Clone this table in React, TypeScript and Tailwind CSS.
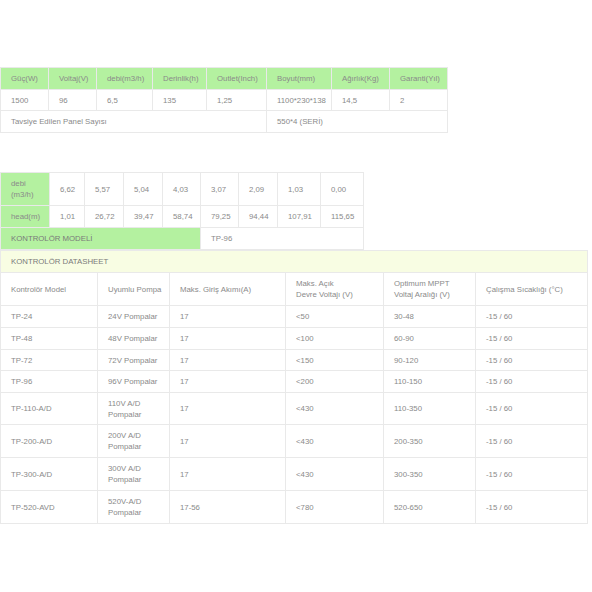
const cell = 'border border-[#e9e9e9] pl-[10px] pr-[4px] align-middle text-left font-normal whitespace-nowrap';

const specCols = [48, 48, 56, 54, 60, 65, 58, 58];
const specHead = ['Güç(W)', 'Voltaj(V)', 'debi(m3/h)', 'Derinlik(h)', 'Outlet(Inch)', 'Boyut(mm)', 'Ağırlık(Kg)', 'Garanti(Yıl)'];
const specRow = ['1500', '96', '6,5', '135', '1,25', '1100*230*138', '14,5', '2'];

const curveCols = [49, 35, 39, 39, 38, 38, 39, 43, 43];
const debi = ['6,62', '5,57', '5,04', '4,03', '3,07', '2,09', '1,03', '0,00'];
const head = ['1,01', '26,72', '39,47', '58,74', '79,25', '94,44', '107,91', '115,65'];

const dsCols = [97, 72, 116, 98, 92, 112];
const dsHead = [['Kontrolör Model'], ['Uyumlu Pompa'], ['Maks. Giriş Akımı(A)'], ['Maks. Açık', 'Devre Voltajı (V)'], ['Optimum MPPT', 'Voltaj Aralığı (V)'], ['Çalışma Sıcaklığı (°C)']];
const dsRows = [
  ['TP-24', '24V Pompalar', '17', '<50', '30-48', '-15 / 60'],
  ['TP-48', '48V Pompalar', '17', '<100', '60-90', '-15 / 60'],
  ['TP-72', '72V Pompalar', '17', '<150', '90-120', '-15 / 60'],
  ['TP-96', '96V Pompalar', '17', '<200', '110-150', '-15 / 60'],
  ['TP-110-A/D', '110V A/D|Pompalar', '17', '<430', '110-350', '-15 / 60'],
  ['TP-200-A/D', '200V A/D|Pompalar', '17', '<430', '200-350', '-15 / 60'],
  ['TP-300-A/D', '300V A/D|Pompalar', '17', '<430', '300-350', '-15 / 60'],
  ['TP-520-AVD', '520V-A/D|Pompalar', '17-56', '<780', '520-650', '-15 / 60'],
];
// row heights in the datasheet, measured off the screenshot
const dsHeights = ['h-[22px]', 'h-[22px]', 'h-[21px]', 'h-[22px]', 'h-[32px]', 'h-[33px]', 'h-[33px]', 'h-[33px]'];

function Lines({ text }: { text: string }) {
  const parts = text.split('|');
  return (
    <>
      {parts.map((p, i) => (
        <span key={i}>
          {i > 0 && <br />}
          {p}
        </span>
      ))}
    </>
  );
}

export default function App() {
  return (
    <div className="w-[592px] h-[592px] bg-white text-[#8a8a8a] text-[7.8px] leading-[11px] font-['Liberation_Sans',Arial,sans-serif] pt-[67px]">
      {/* pompa özellikleri */}
      <table className="table-fixed border-collapse w-[447px]">
        <colgroup>
          {specCols.map((w, i) => <col key={i} style={{ width: w }} />)}
        </colgroup>
        <tbody>
          <tr className="h-[22px] bg-[#b4f1a0]">
            {specHead.map((t) => <td key={t} className={cell}>{t}</td>)}
          </tr>
          <tr className="h-[21px]">
            {specRow.map((t, i) => <td key={i} className={cell}>{t}</td>)}
          </tr>
          <tr className="h-[22px]">
            <td colSpan={5} className={cell}>Tavsiye Edilen Panel Sayısı</td>
            <td colSpan={3} className={cell}>550*4 (SERİ)</td>
          </tr>
        </tbody>
      </table>

      {/* debi / basma eğrisi */}
      <table className="table-fixed border-collapse w-[363px] mt-[39px]">
        <colgroup>
          {curveCols.map((w, i) => <col key={i} style={{ width: w }} />)}
        </colgroup>
        <tbody>
          <tr className="h-[33px]">
            <td className={`${cell} bg-[#b4f1a0]`}>debi<br />(m3/h)</td>
            {debi.map((t, i) => <td key={i} className={cell}>{t}</td>)}
          </tr>
          <tr className="h-[22px]">
            <td className={`${cell} bg-[#b4f1a0]`}>head(m)</td>
            {head.map((t, i) => <td key={i} className={cell}>{t}</td>)}
          </tr>
          <tr className="h-[22px]">
            <td colSpan={5} className={`${cell} bg-[#b4f1a0] text-[#7a7a7a]`}>KONTROLÖR MODELİ</td>
            <td colSpan={4} className={cell}>TP-96</td>
          </tr>
        </tbody>
      </table>

      {/* kontrolör datasheet */}
      <table className="table-fixed border-collapse w-[587px]">
        <colgroup>
          {dsCols.map((w, i) => <col key={i} style={{ width: w }} />)}
        </colgroup>
        <tbody>
          <tr className="h-[22px] bg-[#f8fde3]">
            <td colSpan={6} className={`${cell} text-[#7a7a7a]`}>KONTROLÖR DATASHEET</td>
          </tr>
          <tr className="h-[33px]">
            {dsHead.map((t, i) => <td key={i} className={cell}><Lines text={t.join('|')} /></td>)}
          </tr>
          {dsRows.map((r, ri) => (
            <tr key={ri} className={dsHeights[ri]}>
              {r.map((t, i) => <td key={i} className={cell}><Lines text={t} /></td>)}
            </tr>
          ))}
        </tbody>
      </table>
    </div>
  );
}
